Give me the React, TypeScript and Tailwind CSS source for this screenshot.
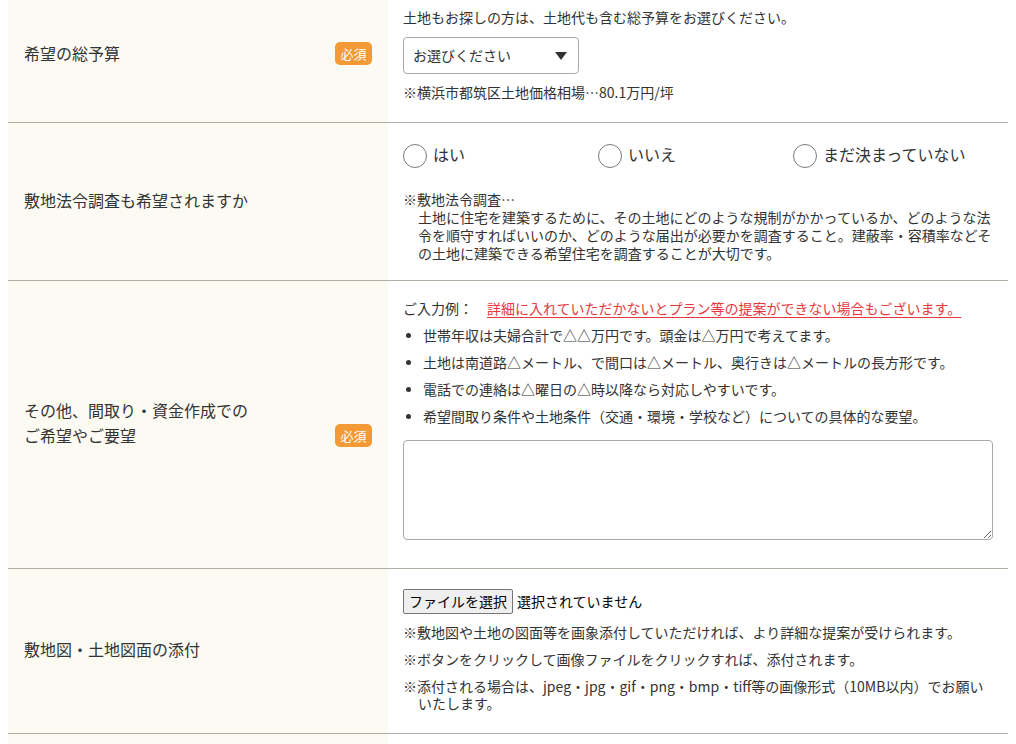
import type { ReactNode } from 'react';

const Badge = ({ extra = '' }: { extra?: string }) => (
    <span className={`shrink-0 w-[37px] h-[23px] rounded-[5px] bg-[#f39a37] text-white text-[13px] leading-[23px] text-center ${extra}`}>
        必須
    </span>
);

const Row = ({ label, badge, height, children }: { label: ReactNode; badge?: ReactNode; height: string; children: ReactNode }) => (
    <div className={`flex border-b border-[#b1aea6] ${height}`}>
        <div className="w-[380px] shrink-0 bg-[#fcfbf3] flex items-center justify-between pl-4 pr-4">
            <div className="text-[16px] leading-[25px] text-[#333] -mt-[3px]">{label}</div>
            {badge}
        </div>
        <div className="flex-1 bg-white px-[15px] text-[#333]">{children}</div>
    </div>
);

const Radio = ({ label }: { label: string }) => (
    <label className="w-[195px] flex items-center gap-[6px] text-[16px] leading-[24px]">
        <span className="w-[24px] h-[24px] rounded-full border border-[#7a7a7a] bg-white shrink-0" />
        <span className="-mt-[4px]">{label}</span>
    </label>
);

const bullets = [
    '世帯年収は夫婦合計で△△万円です。頭金は△万円で考えてます。',
    '土地は南道路△メートル、で間口は△メートル、奥行きは△メートルの長方形です。',
    '電話での連絡は△曜日の△時以降なら対応しやすいです。',
    '希望間取り条件や土地条件（交通・環境・学校など）についての具体的な要望。',
];

export default function App() {
    return (
        <div className="w-[1016px] h-[744px] overflow-hidden bg-white font-['Noto_Sans_CJK_JP','Noto_Sans',sans-serif]">
            <div className="ml-2 w-[1000px] -mt-[12px]">
                {/* budget */}
                <Row label="希望の総予算" badge={<Badge extra="-mt-[3px]" />} height="h-[135px]">
                    <div className="pt-[19px] flex flex-col items-start">
                        <p className="text-[14px] leading-[20px]">土地もお探しの方は、土地代も含む総予算をお選びください。</p>
                        <div className="mt-[10px] w-[176px] h-[37px] border border-[#a9a9a9] rounded-[4px] flex items-center justify-between pl-[9px] pr-[11px]">
                            <span className="text-[14px]">お選びください</span>
                            <svg width="12" height="8" viewBox="0 0 12 8"><path d="M0 0h12L6 8z" fill="#333" /></svg>
                        </div>
                        <p className="mt-[8px] text-[14px] leading-[20px]">※横浜市都筑区土地価格相場…80.1万円/坪</p>
                    </div>
                </Row>

                {/* site survey */}
                <Row label="敷地法令調査も希望されますか" height="h-[158px]">
                    <div className="pt-[21px]">
                        <div className="flex">
                            <Radio label="はい" />
                            <Radio label="いいえ" />
                            <Radio label="まだ決まっていない" />
                        </div>
                        <div className="mt-[22px] text-[14px] leading-[18px]">
                            <p>※敷地法令調査…</p>
                            <p className="pl-[15px]">
                                土地に住宅を建築するために、その土地にどのような規制がかかっているか、どのような法令を順守すればいいのか、どのような届出が必要かを調査すること。建蔽率・容積率などその土地に建築できる希望住宅を調査することが大切です。
                            </p>
                        </div>
                    </div>
                </Row>

                {/* requests */}
                <Row
                    label={<>その他、間取り・資金作成での<br />ご希望やご要望</>}
                    badge={<Badge extra="mt-[22px]" />}
                    height="h-[288px]"
                >
                    <div className="pt-[14px] text-[14px] leading-[27px]">
                        <p>
                            ご入力例：
                            <span className="ml-[14px] text-[#e8383d] underline underline-offset-[3px]">詳細に入れていただかないとプラン等の提案ができない場合もございます。</span>
                        </p>
                        <ul>
                            {bullets.map((b) => (
                                <li key={b} className="flex items-center">
                                    <span className="w-[5px] h-[5px] rounded-full bg-[#333] ml-[3px] mr-[12px]" />
                                    {b}
                                </li>
                            ))}
                        </ul>
                        <textarea className="mt-[10px] block w-full h-[100px] border border-[#a9a9a9] rounded-[4px] resize-y" />
                    </div>
                </Row>

                {/* attachments */}
                <Row label="敷地図・土地図面の添付" height="h-[165px]">
                    <div className="pt-[20px] text-[14px]">
                        <div className="flex items-center gap-[4px]">
                            <button className="h-[25px] px-[5px] bg-[#efefef] border border-[#767676] rounded-[2px] text-[14px] leading-[23px] text-black">ファイルを選択</button>
                            <span className="text-black">選択されていません</span>
                        </div>
                        <div className="mt-[10px] flex flex-col gap-[10px] leading-[17px]">
                            <p>※敷地図や土地の図面等を画象添付していただければ、より詳細な提案が受けられます。</p>
                            <p>※ボタンをクリックして画像ファイルをクリックすれば、添付されます。</p>
                            <p className="pl-[15px] -indent-[15px]">※添付される場合は、jpeg・jpg・gif・png・bmp・tiff等の画像形式（10MB以内）でお願いいたします。</p>
                        </div>
                    </div>
                </Row>

                <div className="flex h-[40px]">
                    <div className="w-[380px] bg-[#fcfbf3]" />
                    <div className="flex-1" />
                </div>
            </div>
        </div>
    );
}
